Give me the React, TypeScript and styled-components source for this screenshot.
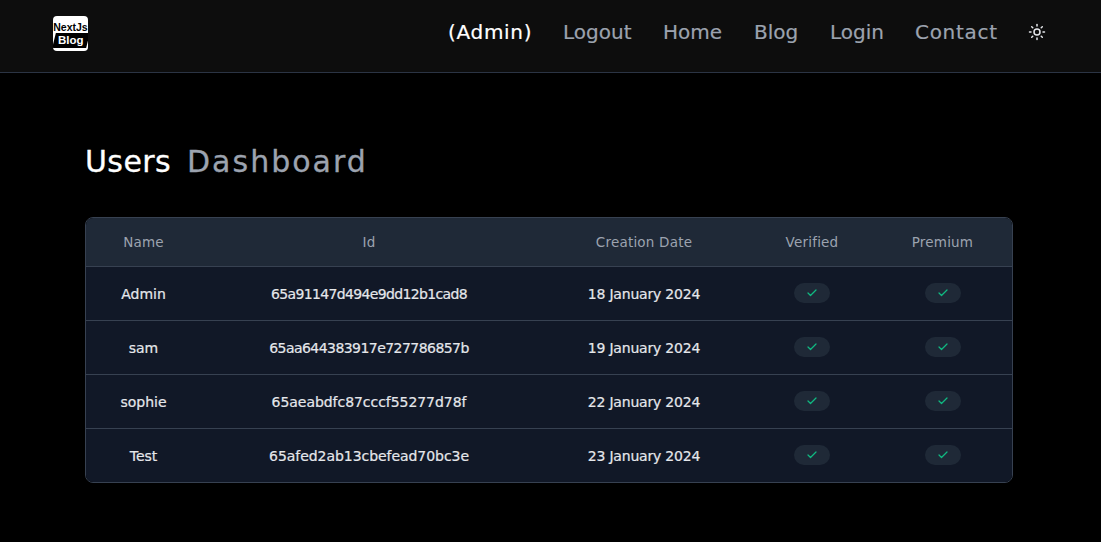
import React from "react";
import styled, { createGlobalStyle } from "styled-components";
import { Check, Sun } from "lucide-react";

const GlobalStyle = createGlobalStyle`
  html, body {
    margin: 0;
    padding: 0;
    background: #000;
    font-family: "DejaVu Sans", "Open Sans", sans-serif;
  }
`;

const Page = styled.div`
  width: 1101px;
  height: 542px;
  overflow: hidden;
  background: #000;
`;

const Header = styled.header`
  height: 72px;
  display: flex;
  align-items: center;
  justify-content: space-between;
  padding: 0 55px 0 53px;
  background: #0d0d0d;
  border-bottom: 1px solid #2b3444;
`;

const Logo = styled.div`
  width: 35px;
  height: 35px;
  margin-bottom: 5px;
  padding-top: 6px;
  box-sizing: border-box;
  border-radius: 4px;
  background: #fff;
  display: flex;
  flex-direction: column;
  align-items: center;
  font-family: "Liberation Sans", sans-serif;
  font-weight: 700;
  color: #000;
  overflow: hidden;
`;

const LogoTop = styled.span`
  font-size: 10.5px;
  line-height: 10px;
  white-space: nowrap;
`;

const LogoBottom = styled.span`
  margin-top: 1px;
  background: #000;
  color: #fff;
  font-size: 11.5px;
  line-height: 15px;
  height: 15px;
  padding: 0 4px;
  transform: skewX(-14deg);
  white-space: nowrap;
`;

const LogoBottomText = styled.span`
  display: inline-block;
  transform: skewX(14deg);
`;

const Nav = styled.nav`
  display: flex;
  align-items: center;
  height: 72px;
  padding-bottom: 8px;
  box-sizing: border-box;
`;

const NavItem = styled.a<{ $active?: boolean; $w: number; $ls: number }>`
  width: ${(p) => p.$w}px;
  margin-right: 32px;
  white-space: nowrap;
  font-size: 20px;
  line-height: 30px;
  letter-spacing: ${(p) => p.$ls}px;
  -webkit-text-stroke: 0.2px currentColor;
  color: ${(p) => (p.$active ? "#fff" : "#9ca3af")};
`;

const ThemeButton = styled.button`
  border: 0;
  padding: 0;
  width: 18px;
  height: 18px;
  display: flex;
  background: transparent;
  color: #e5e7eb;
`;

const Main = styled.main`
  padding: 68px 88px 0 85px;
`;

const Title = styled.h1`
  margin: 0 0 34px;
  display: flex;
  gap: 16px;
  font-size: 30px;
  line-height: 42px;
  font-weight: 400;
  letter-spacing: 0.4px;
  -webkit-text-stroke: 0.3px currentColor;
  color: #fff;
`;

const TitleMuted = styled.span`
  letter-spacing: 2px;
  color: #9ca3af;
`;

const TableFrame = styled.div`
  border: 1px solid #374151;
  border-radius: 8px;
  overflow: hidden;
`;

const Table = styled.table`
  width: 100%;
  border-collapse: collapse;
  table-layout: fixed;
  font-size: 14px;
  line-height: 20px;
`;

const HeadCell = styled.th<{ $w: number }>`
  width: ${(p) => p.$w}px;
  height: 48px;
  padding: 0;
  background: #1f2937;
  color: #9ca3af;
  font-weight: 400;
  font-size: 13.5px;
  letter-spacing: 0.2px;
  text-align: center;
`;

const Row = styled.tr`
  border-top: 1px solid #374151;
  background: #111827;
`;

const Cell = styled.td<{ $ls?: number }>`
  height: 53px;
  padding: 0;
  color: #e5e7eb;
  letter-spacing: ${(p) => p.$ls ?? 0}px;
  -webkit-text-stroke: 0.2px currentColor;
  text-align: center;
  white-space: nowrap;
`;

const Badge = styled.span`
  display: inline-flex;
  align-items: center;
  justify-content: center;
  width: 36px;
  height: 20px;
  margin-bottom: 2px;
  vertical-align: middle;
  border-radius: 10px;
  background: #1f2937;
  color: #10b981;
`;

const navItems = [
  { label: "(Admin)", w: 83, ls: 0.7, active: true },
  { label: "Logout", w: 68, ls: 0 },
  { label: "Home", w: 59, ls: 0 },
  { label: "Blog", w: 44, ls: 0 },
  { label: "Login", w: 53, ls: 0 },
  { label: "Contact", w: 81, ls: 0.7 },
];

const columns = [
  { label: "Name", w: 115 },
  { label: "Id", w: 336 },
  { label: "Creation Date", w: 214 },
  { label: "Verified", w: 122 },
  { label: "Premium", w: 139 },
];

const users = [
  { name: "Admin", id: "65a91147d494e9dd12b1cad8", idLs: -0.65, date: "18 January 2024" },
  { name: "sam", id: "65aa644383917e727786857b", idLs: -0.55, date: "19 January 2024" },
  { name: "sophie", id: "65aeabdfc87cccf55277d78f", idLs: -0.05, date: "22 January 2024" },
  { name: "Test", id: "65afed2ab13cbefead70bc3e", idLs: -0.05, date: "23 January 2024" },
];

const CheckBadge = () => (
  <Badge>
    <Check size={12} strokeWidth={2.5} />
  </Badge>
);

export default function App() {
  return (
    <Page>
      <GlobalStyle />
      <Header>
        <Logo>
          <LogoTop>NextJs</LogoTop>
          <LogoBottom>
            <LogoBottomText>Blog</LogoBottomText>
          </LogoBottom>
        </Logo>
        <Nav>
          {navItems.map((item) => (
            <NavItem key={item.label} $active={item.active} $w={item.w} $ls={item.ls}>
              {item.label}
            </NavItem>
          ))}
          <ThemeButton>
            <Sun size={18} strokeWidth={2} />
          </ThemeButton>
        </Nav>
      </Header>
      <Main>
        <Title>
          Users <TitleMuted>Dashboard</TitleMuted>
        </Title>
        <TableFrame>
          <Table>
            <thead>
              <tr>
                {columns.map((c) => (
                  <HeadCell key={c.label} $w={c.w}>
                    {c.label}
                  </HeadCell>
                ))}
              </tr>
            </thead>
            <tbody>
              {users.map((u) => (
                <Row key={u.id}>
                  <Cell>{u.name}</Cell>
                  <Cell $ls={u.idLs}>{u.id}</Cell>
                  <Cell $ls={-0.2}>{u.date}</Cell>
                  <Cell>
                    <CheckBadge />
                  </Cell>
                  <Cell>
                    <CheckBadge />
                  </Cell>
                </Row>
              ))}
            </tbody>
          </Table>
        </TableFrame>
      </Main>
    </Page>
  );
}
